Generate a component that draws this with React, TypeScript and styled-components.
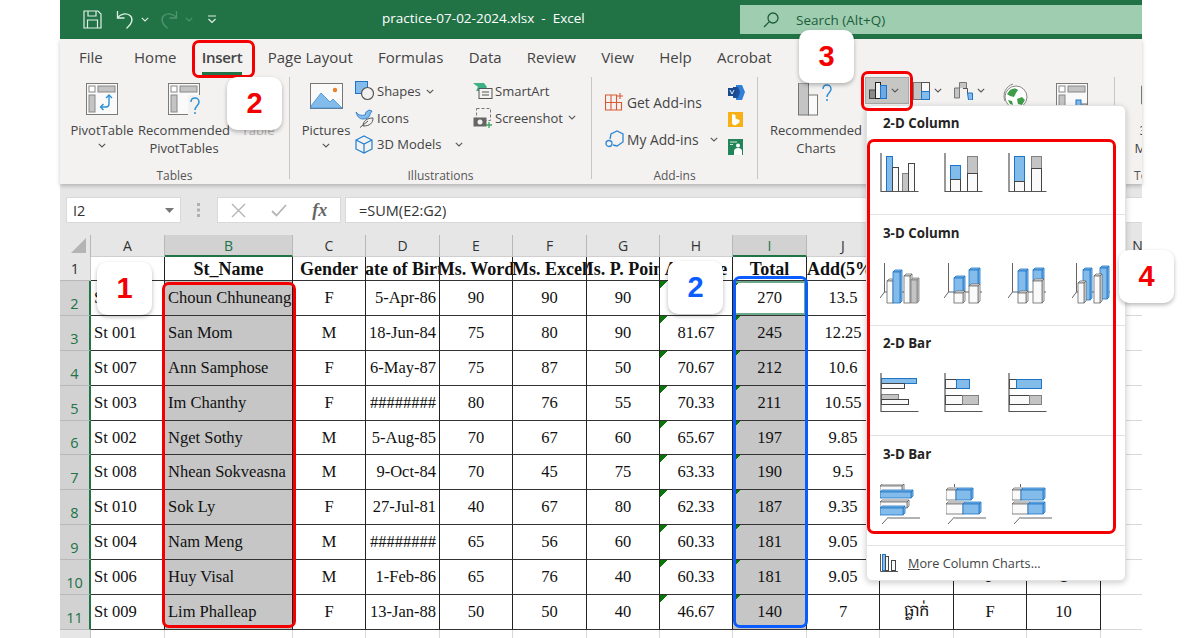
import styled, { createGlobalStyle } from 'styled-components';
import type { ReactNode } from 'react';

const GlobalStyle = createGlobalStyle`
  html, body {
    margin: 0;
    height: 638px;
    overflow: hidden;
    background: #fff;
    font-family: 'Open Sans', 'Liberation Sans', sans-serif;
  }
`;

const BLUE = '#83bbeb';
const BLUE_LINE = '#1f74c4';
const GREY = '#c4c4c4';
const GREY_LINE = '#808080';
const WHITE = '#fafafa';
const INK = '#444';

/* ---------- frame ---------- */

const Frame = styled.div`
  position: relative;
  width: 1082px;
  height: 638px;
  margin-left: 60px;
  background: #e6e6e6;
`;

/* ---------- title bar ---------- */

const TitleBar = styled.div`
  display: flex;
  height: 39px;
  background: #217346;
`;

const QuickAccess = styled.div`
  display: flex;
  align-items: center;
  width: 322px;
  padding-left: 23px;
  box-sizing: border-box;
`;

const QatItem = styled.span<{ $left?: number }>`
  display: inline-flex;
  margin-left: ${(p) => p.$left ?? 0}px;
`;

const FileTitle = styled.div`
  width: 358px;
  color: #fff;
  font-size: 13.5px;
  line-height: 37px;
  white-space: pre;
`;

const SearchBox = styled.div`
  display: flex;
  align-items: center;
  gap: 17px;
  flex: 1;
  height: 29px;
  margin-top: 5px;
  padding-left: 23px;
  background: #9fcdb0;
  color: #1d5c3a;
  font-size: 13.5px;
`;

/* ---------- ribbon ---------- */

const Ribbon = styled.div`
  height: 145px;
  background: #f3f2f1;
  box-shadow: 0 2px 4px rgba(0, 0, 0, 0.22);
  position: relative;
`;

const TabRow = styled.div`
  display: flex;
  gap: 25.3px;
  height: 38px;
  padding-left: 19px;
  color: #444;
  font-size: 15px;
  line-height: 36px;
`;

const Tab = styled.div<{ $active?: boolean; $wide?: boolean }>`
  height: 33px;
  margin-right: ${(p) => (p.$wide ? '6px' : '0')};
  color: #444;
  letter-spacing: ${(p) => (p.$active ? '-0.3px' : '0')};
  font-weight: ${(p) => (p.$active ? 600 : 400)};
  border-bottom: ${(p) => (p.$active ? '3px solid #217346' : '3px solid transparent')};
`;

const GroupRow = styled.div`
  display: flex;
  height: 107px;
  overflow: hidden;
`;

const Group = styled.div<{ $width: number; $last?: boolean }>`
  display: flex;
  flex-direction: column;
  flex: none;
  width: ${(p) => p.$width}px;
  box-sizing: border-box;
  margin-bottom: 5px;
  border-right: ${(p) => (p.$last ? 'none' : '1px solid #c8c6c4')};
`;

const GroupBody = styled.div<{ $pad?: number; $gap?: number }>`
  display: flex;
  flex: 1;
  gap: ${(p) => p.$gap ?? 0}px;
  padding-left: ${(p) => p.$pad ?? 0}px;
`;

const GroupLabel = styled.div`
  height: 17px;
  margin-bottom: -5px;
  color: #555;
  font-size: 12px;
  line-height: 17px;
  text-align: center;
`;

const BigButton = styled.div<{ $width: number; $faint?: boolean }>`
  display: flex;
  flex-direction: column;
  align-items: center;
  flex: none;
  width: ${(p) => p.$width}px;
  padding-top: 6px;
  color: ${(p) => (p.$faint ? '#b5b5b5' : '#444')};
  font-size: 13px;
  line-height: 18px;
  text-align: center;
  white-space: pre-line;
`;

const BigIcon = styled.div`
  display: flex;
  justify-content: center;
  height: 33px;
  margin-bottom: 5px;
`;

const DropCaret = styled.span`
  display: inline-flex;
  margin-top: 4px;
`;

const SmallList = styled.div<{ $left?: number; $width: number; $size?: number }>`
  display: flex;
  flex-direction: column;
  flex: none;
  width: ${(p) => p.$width}px;
  margin-left: ${(p) => p.$left ?? 0}px;
  padding-top: 1px;
  font-size: ${(p) => p.$size ?? 13}px;
`;

const SmallButton = styled.div<{ $height?: number }>`
  display: flex;
  align-items: center;
  height: ${(p) => p.$height ?? 26.5}px;
  color: #444;
  white-space: nowrap;
`;

const SmallIcon = styled.div`
  display: flex;
  align-items: center;
  width: 22px;
  flex: none;
`;

const Caret = styled.span<{ $gap?: number }>`
  display: inline-flex;
  margin-left: ${(p) => p.$gap ?? 5}px;
`;

const AppIcons = styled.div`
  display: flex;
  flex-direction: column;
  gap: 12px;
  flex: none;
  padding-top: 8px;
`;

const ChartButton = styled.div<{ $on?: boolean; $width: number; $left?: number }>`
  display: flex;
  align-items: center;
  gap: 4px;
  flex: none;
  width: ${(p) => p.$width}px;
  height: 27px;
  padding-left: 3px;
  margin-left: ${(p) => p.$left ?? 0}px;
  background: ${(p) => (p.$on ? '#c6c6c4' : 'transparent')};
  border: ${(p) => (p.$on ? '1px solid #a9a9a7' : '1px solid transparent')};
  box-sizing: border-box;
`;

const TopIcon = styled.div<{ $left: number }>`
  flex: none;
  margin-left: ${(p) => p.$left}px;
  padding-top: 6px;
`;

/* ---------- formula bar ---------- */

const FormulaRow = styled.div`
  display: flex;
  align-items: stretch;
  height: 26px;
  margin: 13px 0 12px 6px;
  color: #333;
  font-size: 14.5px;
`;

const NameBox = styled.div`
  display: flex;
  align-items: center;
  justify-content: space-between;
  width: 115px;
  padding: 0 6px;
  box-sizing: border-box;
  background: #fff;
  border: 1px solid #d9d9d9;
`;

const GripDots = styled.div`
  display: flex;
  align-items: center;
  justify-content: center;
  width: 36px;
`;

const FormulaButtons = styled.div`
  display: flex;
  align-items: center;
  justify-content: space-around;
  width: 124px;
  box-sizing: border-box;
  background: #fff;
  border: 1px solid #d9d9d9;
`;

const FxLabel = styled.span`
  color: #666;
  font-family: 'Liberation Serif', serif;
  font-size: 18px;
  font-style: italic;
  font-weight: 700;
`;

const FormulaInput = styled.div`
  display: flex;
  align-items: center;
  flex: 1;
  margin-left: 4px;
  padding-left: 13px;
  background: #fff;
  border: 1px solid #d9d9d9;
  border-right: none;
`;

/* ---------- sheet ---------- */

const SheetClip = styled.div`
  height: 403px;
  overflow: hidden;
`;

const Sheet = styled.div`
  display: grid;
  grid-template-columns: 31px 74px 128px 73px 74px 73px 74px 73px 73px 74px 73px 74px 73px 74px 74px;
  grid-template-rows: 22px 24px repeat(10, 34.9px) 20px;
  background: #fff;
`;

const Corner = styled.div`
  display: flex;
  align-items: flex-end;
  justify-content: flex-end;
  padding: 0 4px 4px 0;
  background: #e6e6e6;
  border-right: 1px solid #b8b8b8;
`;

const ColHead = styled.div<{ $sel?: boolean }>`
  display: flex;
  align-items: center;
  justify-content: center;
  box-sizing: border-box;
  background: ${(p) => (p.$sel ? '#d2d2d2' : '#e6e6e6')};
  border-right: 1px solid #b8b8b8;
  border-bottom: ${(p) => (p.$sel ? '2px solid #217346' : '1px solid #cfcfcf')};
  color: ${(p) => (p.$sel ? '#217346' : '#333')};
  font-size: 14px;
`;

const RowHead = styled.div<{ $sel?: boolean }>`
  display: flex;
  align-items: ${(p) => (p.$sel ? 'flex-end' : 'center')};
  justify-content: center;
  box-sizing: border-box;
  background: ${(p) => (p.$sel ? '#d2d2d2' : '#e6e6e6')};
  border-right: ${(p) => (p.$sel ? '2px solid #217346' : '1px solid #c4c4c4')};
  border-bottom: 1px solid #b8b8b8;
  color: ${(p) => (p.$sel ? '#217346' : '#333')};
  font-size: 14.5px;
  line-height: 22px;
`;

const Cell = styled.div<{
  $align?: 'left' | 'center' | 'right';
  $sel?: boolean;
  $active?: boolean;
  $head?: boolean;
  $flag?: boolean;
  $empty?: boolean;
}>`
  display: flex;
  align-items: center;
  justify-content: ${(p) =>
    p.$align === 'left' ? 'flex-start' : p.$align === 'right' ? 'flex-end' : 'center'};
  padding: ${(p) => (p.$head ? '1px' : '0')} ${(p) => (p.$align === 'right' ? '3px' : '0')} 0 ${(p) => (p.$align === 'left' ? '3px' : '0')};
  box-sizing: border-box;
  overflow: hidden;
  white-space: nowrap;
  color: #111;
  font-family: 'Liberation Serif', serif;
  font-size: ${(p) => (p.$head ? '18px' : '16.5px')};
  font-weight: ${(p) => (p.$head ? 700 : 400)};
  background-color: ${(p) => (p.$sel ? '#c6c6c6' : '#fff')};
  background-image: ${(p) =>
    p.$flag ? 'linear-gradient(135deg, #0a760a 5px, transparent 5px)' : 'none'};
  border-right: 1px solid ${(p) => (p.$empty ? '#d8d8d8' : '#222')};
  border-bottom: 1px solid ${(p) => (p.$empty ? '#d8d8d8' : '#333')};
  ${(p) => p.$active && 'box-shadow: inset 0 0 0 2px #6ea88a;'}
`;

/* ---------- call-outs that lie over the page ---------- */

const Badge = styled.div<{ $x: number; $y: number; $color: string }>`
  position: absolute;
  left: ${(p) => p.$x}px;
  top: ${(p) => p.$y}px;
  display: flex;
  align-items: center;
  justify-content: center;
  width: 55px;
  height: 53px;
  border-radius: 10px;
  background: #fff;
  box-shadow: 0 2px 4px rgba(0, 0, 0, 0.28);
  color: ${(p) => p.$color};
  font-family: 'Liberation Sans', Arial, sans-serif;
  font-size: 29px;
  font-weight: 700;
`;

const Outline = styled.div<{ $x: number; $y: number; $w: number; $h: number; $color?: string }>`
  position: absolute;
  left: ${(p) => p.$x}px;
  top: ${(p) => p.$y}px;
  width: ${(p) => p.$w}px;
  height: ${(p) => p.$h}px;
  box-sizing: border-box;
  border: 3px solid ${(p) => p.$color ?? '#f50000'};
  border-radius: 7px;
`;

/* ---------- chart menu ---------- */

const ChartMenu = styled.div`
  position: absolute;
  left: 806px;
  top: 105px;
  width: 260px;
  height: 476px;
  box-sizing: border-box;
  background: #fff;
  border: 1px solid #e2e2e2;
  border-radius: 6px;
  box-shadow: 0 2px 6px rgba(0, 0, 0, 0.2);
`;

const MenuSection = styled.div`
  height: 110px;
  box-sizing: border-box;
  padding: 8px 0 0 13px;
  border-bottom: 1px solid #e4e2e0;

  &:nth-child(1) {
    height: 109px;
  }
  &:nth-child(2) {
    height: 111px;
  }
  &:nth-child(even) {
    padding-top: 9px;
  }
`;

const MenuTitle = styled.div`
  height: 18px;
  padding-left: 3px;
  color: #252423;
  font-size: 13.3px;
  font-weight: 700;
  line-height: 18px;
`;

const IconRow = styled.div`
  display: flex;
  gap: 24px;
  margin-top: 20.5px;
`;

const MoreRow = styled.div`
  display: flex;
  align-items: center;
  gap: 10px;
  height: 34px;
  padding-left: 13px;
  color: #444;
  font-size: 12.7px;
`;

const Underlined = styled.span`
  text-decoration: underline;
`;

/* ---------- drawn icons ---------- */

const Chevron = ({ color = '#555' }: { color?: string }) => (
  <svg width="8" height="5" viewBox="0 0 8 5" fill="none">
    <path d="M0.8 0.8 4 4 7.2 0.8" stroke={color} strokeWidth="1.1" />
  </svg>
);

const SaveIcon = () => (
  <svg width="19" height="19" viewBox="0 0 19 19" fill="none" stroke="#dfeee5" strokeWidth="1.2">
    <path d="M1 1h14l3 3v14H1z" />
    <path d="M5 1v5h8V1M4.5 18v-8h10v8" />
  </svg>
);

const ArrowIcon = ({ color, flip }: { color: string; flip?: boolean }) => (
  <svg width="18" height="19" viewBox="0 0 18 19" fill="none" stroke={color} strokeWidth="1.3"
    transform={flip ? 'scale(-1 1)' : undefined}>
    <path d="M1.5 1v7h7" />
    <path d="M1.5 8C4 4 10 2.5 14 5.500 c3.500 3 2.500 8 -3.500 13" />
  </svg>
);

const CustomizeIcon = () => (
  <svg width="10" height="9" viewBox="0 0 10 9" fill="none" stroke="#dfeee5" strokeWidth="1.2">
    <path d="M1 1h8M1.500 4 5 7.500 8.500 4" />
  </svg>
);

const SearchIcon = () => (
  <svg width="16" height="16" viewBox="0 0 16 16" fill="none" stroke="#1d5c3a" strokeWidth="1.3">
    <circle cx="10" cy="6" r="5" />
    <path d="M6.400 9.600 1 15" />
  </svg>
);

const PivotPanels = () => (
  <g>
    <rect x="0.5" y="0.5" width="31" height="31" fill="#fafafa" stroke="#7a7a7a" />
    <rect x="3" y="3" width="6" height="6" fill="#fff" stroke="#888" />
    <rect x="12" y="3" width="17" height="6" fill={GREY} stroke="#888" />
    <rect x="3" y="12" width="6" height="17" fill={GREY} stroke="#888" />
  </g>
);

const PivotTableIcon = () => (
  <svg width="32" height="33" viewBox="0 0 32 33" fill="none">
    <PivotPanels />
    <path d="M23 12v9a3 3 0 0 1-3 3h-5" stroke="#2d8fd5" strokeWidth="1.4" />
    <path d="M20 15l3-3 3 3M17.500 21l-3 3 3 3" stroke="#2d8fd5" strokeWidth="1.4" />
  </svg>
);

const QuestionMark = ({ x, y }: { x: number; y: number }) => (
  <g transform={`translate(${x} ${y})`} fill="none" stroke="#2d8fd5" strokeWidth="1.5">
    <path d="M1 5C1 2 3 1 5 1s4 1.500 4 4c0 3.500-4 4-4 8" />
    <path d="M5 15v2" />
  </g>
);

const RecommendedPivotIcon = () => (
  <svg width="40" height="33" viewBox="-4 0 40 33" fill="none">
    <PivotPanels />
    <rect x="20" y="12" width="16" height="21" fill="#f3f2f1" />
    <QuestionMark x={22} y={14} />
  </svg>
);

const PicturesIcon = () => (
  <svg width="33" height="26" viewBox="0 0 33 26">
    <rect x="0.5" y="0.5" width="32" height="25" fill="#fafafa" stroke="#777" />
    <circle cx="25" cy="7" r="2.200" fill="#e8802c" />
    <path d="M1 23 11 10l9 9 3-3 9 9H1z" fill="#83bbeb" stroke="#3b8fd6" strokeWidth="0.8" />
  </svg>
);

const ShapesIcon = () => (
  <svg width="20" height="20" viewBox="0 0 20 20">
    <rect x="0.5" y="0.5" width="12" height="12" fill="#83bbeb" stroke="#1f74c4" />
    <circle cx="12.500" cy="12.500" r="6" fill="#f3f2f1" stroke="#555" strokeWidth="1.2" />
  </svg>
);

const IconsIcon = () => (
  <svg width="20" height="20" viewBox="0 0 20 20">
    <path d="M1 4c2 3 5 4 9 3l1-3 3-2 3 1-2 3c0 3-3 5-7 5-4 0-6-3-7-7z" fill="#83bbeb" stroke="#1f74c4" strokeWidth="0.8" />
    <path d="M8 18c0-5 4-8 10-8 0 5-3 8-10 8zM5 19.500 13 13" fill="#f3f2f1" stroke="#555" strokeWidth="1" />
  </svg>
);

const CubeIcon = () => (
  <svg width="18" height="19" viewBox="0 0 18 19" fill="none" stroke="#1f7fd0" strokeWidth="1.2">
    <path d="M9 1 17 5v9l-8 4-8-4V5z" />
    <path d="M1 5l8 4 8-4M9 9v9" />
  </svg>
);

const SmartArtIcon = () => (
  <svg width="20" height="18" viewBox="0 0 20 18">
    <path d="M0 1h11l3 4-3 4H3l2-4z" fill="#3fb083" />
    <rect x="6" y="6.500" width="13" height="10" fill="#f3f2f1" stroke="#555" />
    <path d="M9 10h7M9 13h7" stroke="#555" />
  </svg>
);

const ScreenshotIcon = () => (
  <svg width="20" height="20" viewBox="0 0 20 20" fill="none">
    <rect x="3.500" y="0.500" width="14" height="12" stroke="#777" strokeDasharray="3 2" />
    <rect x="0.500" y="9.500" width="13" height="9" fill="#666" />
    <circle cx="7" cy="14" r="2.500" fill="#f3f2f1" />
    <path d="M13 17h6M16 14v6" stroke="#3fa35f" strokeWidth="1.300" />
  </svg>
);

const GetAddinsIcon = () => (
  <svg width="19" height="18" viewBox="0 0 19 18" fill="none" stroke="#d9582f" strokeWidth="1.1">
    <path d="M0.500 2h11v15H0.500zM0.500 9.500h16V17h-5M6 2v15" />
    <path d="M15 0v6M12 3h6" />
  </svg>
);

const MyAddinsIcon = () => (
  <svg width="19" height="18" viewBox="0 0 19 18" fill="none" stroke="#2f86cf" strokeWidth="1.300">
    <path d="M5 9 6 4l6-3 6 3v8l-6 4-4-1" />
    <circle cx="4" cy="13.500" r="3" />
  </svg>
);

const VisioIcon = () => (
  <svg width="17" height="15" viewBox="0 0 17 15">
    <path d="M8 0h6l3 7-3 8H8z" fill="#2f7fd6" />
    <path d="M5 2h5l2 5-2 6H5z" fill="#1b4f9c" />
    <rect x="0" y="3" width="8" height="8" fill="#174a8f" />
    <path d="M2 5l2 4 2-4" stroke="#fff" fill="none" strokeWidth="0.900" />
  </svg>
);

const BingIcon = () => (
  <svg width="15" height="15" viewBox="0 0 15 15">
    <rect width="15" height="15" fill="#f7b016" />
    <path d="M4 2v10l3 1.500 4.500-3V8L7.500 6.500V3z" fill="#fff" />
  </svg>
);

const PeopleIcon = () => (
  <svg width="15" height="16" viewBox="0 0 15 16">
    <rect width="15" height="16" fill="#22855a" />
    <path d="M2 3h7M2 5.500h3" stroke="#cfe8da" strokeWidth="1" />
    <circle cx="10" cy="6.500" r="2" fill="#fff" />
    <path d="M6 16v-4c0-2 2-3 4-3s4 1 4 3v4z" fill="#fff" />
  </svg>
);

const RecommendedChartsIcon = () => (
  <svg width="36" height="33" viewBox="0 0 36 33">
    <rect x="0.500" y="0" width="10" height="32" fill={GREY} stroke="#777" />
    <rect x="10.500" y="12" width="9" height="20" fill="#fafafa" stroke="#777" />
    <QuestionMark x={24} y={1} />
  </svg>
);

const ColumnChartGlyph = () => (
  <svg width="18" height="17" viewBox="0 0 18 17">
    <rect x="0.500" y="8" width="6" height="8.500" fill="#8a8a8a" stroke="#444" />
    <rect x="6.500" y="0.500" width="5" height="16" fill="#f4f4f4" stroke="#222" />
    <rect x="11.500" y="3.500" width="6" height="13" fill="#6aa8e6" stroke="#1f74c4" />
  </svg>
);

const HierarchyGlyph = () => (
  <svg width="17" height="18" viewBox="0 0 17 18">
    <rect x="0.500" y="0.500" width="8" height="17" fill={GREY} stroke="#777" />
    <rect x="8.500" y="0.500" width="8" height="9" fill="#fafafa" stroke="#555" />
    <rect x="8.500" y="9.500" width="8" height="8" fill={BLUE} stroke={BLUE_LINE} />
  </svg>
);

const WaterfallGlyph = () => (
  <svg width="19" height="18" viewBox="0 0 19 18" fill="none">
    <path d="M0.500 16V6h5v10zM5.500 6V0.500h7v6" fill={GREY} stroke="#777" />
    <path d="M9 6.500h4.500V11" stroke="#555" />
    <path d="M13.500 11h5v7h-4z" fill={BLUE} stroke={BLUE_LINE} />
  </svg>
);

const GlobeGlyph = () => (
  <svg width="26" height="27" viewBox="0 0 26 27" fill="none">
    <circle cx="14" cy="14" r="11" fill="#fff" stroke="#888" />
    <path d="M8 7c3-2 6-2 8 0l-2 3-2 4-4-1-3-2zM15 16l5-2 3 3-3 5-4-1zM6 17l4 1 1 4-3-1z" fill="#3f9d4a" />
    <path d="M3 18C0 11 4 3 11 1" stroke="#888" />
  </svg>
);

const PivotChartGlyph = () => (
  <svg width="34" height="33" viewBox="0 0 34 33" fill="none">
    <PivotPanels />
    <rect x="20" y="17" width="5" height="14" fill={BLUE} stroke={BLUE_LINE} />
    <rect x="26" y="21" width="5" height="10" fill={GREY} stroke="#777" />
  </svg>
);

const MapsGlyph = () => (
  <svg width="14" height="22" viewBox="0 0 14 22" fill="none" stroke="#777">
    <path d="M0.500 3 5 0.500V18L0.500 21zM5 0.500h8.500V18H5" fill="#fafafa" />
  </svg>
);

const ArrowDown = () => (
  <svg width="9" height="5" viewBox="0 0 9 5">
    <path d="M0 0h9L4.500 5z" fill="#777" />
  </svg>
);

const Grip = () => (
  <svg width="4" height="14" viewBox="0 0 4 14" fill="#b0b0b0">
    <rect width="3" height="3" />
    <rect y="5.500" width="3" height="3" />
    <rect y="11" width="3" height="3" />
  </svg>
);

const CrossIcon = () => (
  <svg width="15" height="15" viewBox="0 0 15 15" fill="none" stroke="#b5b5b5" strokeWidth="1.400">
    <path d="M1 1l13 13M14 1 1 14" />
  </svg>
);

const CheckIcon = () => (
  <svg width="16" height="13" viewBox="0 0 16 13" fill="none" stroke="#b5b5b5" strokeWidth="1.800">
    <path d="M1 7l4.500 4.500L15 1" />
  </svg>
);

const CornerMark = () => (
  <svg width="15" height="15" viewBox="0 0 15 15">
    <path d="M15 0v15H0z" fill="#b4b4b4" />
  </svg>
);

/* Chart gallery: one 40 × 40 drawing per chart type */

const Rect = ({ x, y, w, h, tone }: { x: number; y: number; w: number; h: number; tone: 'b' | 'g' | 'w' }) => (
  <rect
    x={x + 0.5}
    y={y + 0.5}
    width={w}
    height={h}
    fill={tone === 'b' ? BLUE : tone === 'g' ? GREY : WHITE}
    stroke={tone === 'b' ? BLUE_LINE : tone === 'g' ? GREY_LINE : INK}
  />
);

const Frame2D = ({ children }: { children: ReactNode }) => (
  <svg width="40" height="40" viewBox="0 0 40 40" fill="none">
    {children}
    <path d="M1 0v38.500h37.500" stroke="#555" strokeWidth="1.200" />
  </svg>
);

const Box3D = ({ x, y, w, h, tone }: { x: number; y: number; w: number; h: number; tone: 'b' | 'g' | 'w' }) => {
  const fill = tone === 'b' ? BLUE : tone === 'g' ? GREY : WHITE;
  const line = tone === 'b' ? BLUE_LINE : tone === 'g' ? GREY_LINE : '#666';
  return (
    <g stroke={line} strokeWidth="0.800" fill={fill}>
      <path d={`M${x} ${y}l2 -2h${w}l-2 2zM${x + w} ${y}l2 -2v${h}l-2 2z`} />
      <rect x={x} y={y} width={w} height={h} />
    </g>
  );
};

const Frame3D = ({ children }: { children: ReactNode }) => (
  <svg width="40" height="42" viewBox="0 0 40 42" fill="none">
    <path d="M4.500 0v29M0 35l4.500-6H38" stroke="#666" />
    {children}
  </svg>
);

const FrameBar3D = ({ children }: { children: ReactNode }) => (
  <svg width="42" height="41" viewBox="0 0 42 41" fill="none">
    <path d="M8.500 33 2 40M8.500 34H40" stroke="#666" />
    {children}
  </svg>
);

const columnCharts = [
  <Frame2D key="a">
    <Rect x={6} y={3} w={6} h={35} tone="b" />
    <Rect x={12} y={14} w={6} h={24} tone="w" />
    <Rect x={22} y={20} w={6} h={18} tone="g" />
    <Rect x={28} y={10} w={6} h={28} tone="w" />
  </Frame2D>,
  <Frame2D key="b">
    <Rect x={6} y={12} w={10} h={14} tone="b" />
    <Rect x={6} y={26} w={10} h={12} tone="w" />
    <Rect x={23} y={3} w={10} h={17} tone="g" />
    <Rect x={23} y={20} w={10} h={18} tone="w" />
  </Frame2D>,
  <Frame2D key="c">
    <Rect x={6} y={3} w={10} h={25} tone="b" />
    <Rect x={6} y={28} w={10} h={10} tone="w" />
    <Rect x={23} y={3} w={10} h={12} tone="g" />
    <Rect x={23} y={15} w={10} h={23} tone="w" />
  </Frame2D>,
];

const column3D = [
  <Frame3D key="a">
    <Box3D x={7} y={18} w={6} h={22} tone="w" />
    <Box3D x={13} y={9} w={7} h={31} tone="b" />
    <Box3D x={24} y={13} w={6} h={27} tone="w" />
    <Box3D x={31} y={17} w={6} h={23} tone="g" />
  </Frame3D>,
  <Frame3D key="b">
    <Box3D x={10} y={15} w={9} h={15} tone="b" />
    <Box3D x={10} y={30} w={9} h={10} tone="w" />
    <Box3D x={25} y={7} w={9} h={16} tone="b" />
    <Box3D x={25} y={23} w={9} h={17} tone="w" />
  </Frame3D>,
  <Frame3D key="c">
    <Box3D x={10} y={8} w={8} h={22} tone="b" />
    <Box3D x={10} y={30} w={8} h={10} tone="w" />
    <Box3D x={25} y={7} w={9} h={11} tone="b" />
    <Box3D x={25} y={18} w={9} h={22} tone="w" />
  </Frame3D>,
  <Frame3D key="d">
    <Box3D x={11} y={7} w={7} h={30} tone="b" />
    <Box3D x={28} y={5} w={7} h={31} tone="b" />
    <Box3D x={6} y={20} w={6} h={20} tone="w" />
    <Box3D x={22} y={13} w={6} h={27} tone="w" />
  </Frame3D>,
];

const bar2D = [
  <Frame2D key="a">
    <Rect x={1} y={5} w={35} h={5} tone="b" />
    <Rect x={1} y={10} w={23} h={5} tone="w" />
    <Rect x={1} y={21} w={17} h={5} tone="g" />
    <Rect x={1} y={26} w={27} h={5} tone="w" />
  </Frame2D>,
  <Frame2D key="b">
    <Rect x={1} y={6} w={11} h={9} tone="w" />
    <Rect x={12} y={6} w={13} h={9} tone="b" />
    <Rect x={1} y={22} w={17} h={9} tone="w" />
    <Rect x={18} y={22} w={16} h={9} tone="g" />
  </Frame2D>,
  <Frame2D key="c">
    <Rect x={1} y={6} w={7} h={9} tone="w" />
    <Rect x={8} y={6} w={25} h={9} tone="b" />
    <Rect x={1} y={22} w={20} h={9} tone="w" />
    <Rect x={21} y={22} w={12} h={9} tone="g" />
  </Frame2D>,
];

const bar3D = [
  <FrameBar3D key="a">
    <Box3D x={0} y={2} w={22} h={6} tone="w" />
    <Box3D x={0} y={8} w={31} h={6} tone="b" />
    <Box3D x={0} y={18} w={27} h={6} tone="w" />
    <Box3D x={0} y={24} w={23} h={7} tone="b" />
  </FrameBar3D>,
  <FrameBar3D key="b">
    <path d="M8.500 0v3" stroke="#666" />
    <Box3D x={0} y={6} w={10} h={10} tone="w" />
    <Box3D x={10} y={6} w={15} h={10} tone="b" />
    <Box3D x={0} y={20} w={17} h={10} tone="w" />
    <Box3D x={17} y={20} w={16} h={10} tone="b" />
  </FrameBar3D>,
  <FrameBar3D key="c">
    <path d="M8.500 0v3" stroke="#666" />
    <Box3D x={0} y={6} w={9} h={10} tone="w" />
    <Box3D x={9} y={6} w={22} h={10} tone="b" />
    <Box3D x={0} y={20} w={16} h={10} tone="w" />
    <Box3D x={16} y={20} w={15} h={10} tone="b" />
  </FrameBar3D>,
];

const MoreChartsIcon = () => (
  <svg width="18" height="18" viewBox="0 0 18 18" fill="none">
    <rect x="2.500" y="0.500" width="3" height="16" fill={BLUE} stroke={BLUE_LINE} />
    <rect x="5.500" y="2.500" width="3" height="14" fill={WHITE} stroke={INK} />
    <rect x="11.500" y="6.500" width="4" height="10" fill={WHITE} stroke={INK} />
    <path d="M0.500 0v17.500H18" stroke="#555" />
  </svg>
);

/* ---------- data ---------- */

const tabs = ['Page Layout', 'Formulas', 'Data', 'Review', 'View', 'Help', 'Acrobat'];
const columns = ['A', 'B', 'C', 'D', 'E', 'F', 'G', 'H', 'I', 'J', 'K', 'L', 'M', 'N'];
const titles = ['', 'St_Name', 'Gender', 'Date of Birth', 'Ms. Word', 'Ms. Excel', 'Ms. P. Point', 'Average', 'Total', 'Add(5%)', '', '', ''];

const students = [
  ['St 005', 'Choun Chhuneang', 'F', '5-Apr-86', '90', '90', '90', '90', '270', '13.5', '', '', ''],
  ['St 001', 'San Mom', 'M', '18-Jun-84', '75', '80', '90', '81.67', '245', '12.25', '', '', ''],
  ['St 007', 'Ann Samphose', 'F', '6-May-87', '75', '87', '50', '70.67', '212', '10.6', '', '', ''],
  ['St 003', 'Im Chanthy', 'F', '########', '80', '76', '55', '70.33', '211', '10.55', '', '', ''],
  ['St 002', 'Nget Sothy', 'M', '5-Aug-85', '70', '67', '60', '65.67', '197', '9.85', '', '', ''],
  ['St 008', 'Nhean Sokveasna', 'M', '9-Oct-84', '70', '45', '75', '63.33', '190', '9.5', '', '', ''],
  ['St 010', 'Sok Ly', 'F', '27-Jul-81', '40', '67', '80', '62.33', '187', '9.35', '', '', ''],
  ['St 004', 'Nam Meng', 'M', '########', '65', '56', '60', '60.33', '181', '9.05', '', '', ''],
  ['St 006', 'Huy Visal', 'M', '1-Feb-86', '65', '76', '40', '60.33', '181', '9.05', '', 'F', '1'],
  ['St 009', 'Lim Phalleap', 'F', '13-Jan-88', '50', '50', '40', '46.67', '140', '7', 'ធ្លាក់', 'F', '10'],
];

const alignFor = (col: number): 'left' | 'center' | 'right' =>
  col <= 1 ? 'left' : col === 3 ? 'right' : 'center';

function App() {
  return (
    <>
      <GlobalStyle />
      <Frame>
        <TitleBar>
          <QuickAccess>
            <SaveIcon />
            <QatItem $left={14}><ArrowIcon color="#dfeee5" /></QatItem>
            <QatItem $left={7}><Chevron color="#dfeee5" /></QatItem>
            <QatItem $left={11}><ArrowIcon color="#4f9570" flip /></QatItem>
            <QatItem $left={7}><Chevron color="#4f9570" /></QatItem>
            <QatItem $left={14}><CustomizeIcon /></QatItem>
          </QuickAccess>
          <FileTitle>practice-07-02-2024.xlsx  -  Excel</FileTitle>
          <SearchBox>
            <SearchIcon />
            Search (Alt+Q)
          </SearchBox>
        </TitleBar>

        <Ribbon>
          <TabRow>
            <Tab $wide>File</Tab>
            <Tab>Home</Tab>
            <Tab $active>Insert</Tab>
            {tabs.map((tab) => (
              <Tab key={tab}>{tab}</Tab>
            ))}
          </TabRow>
          <GroupRow>
            <Group $width={230}>
              <GroupBody $pad={11} $gap={5}>
                <BigButton $width={62}>
                  <BigIcon><PivotTableIcon /></BigIcon>
                  PivotTable
                  <DropCaret><Chevron /></DropCaret>
                </BigButton>
                <BigButton $width={92}>
                  <BigIcon><RecommendedPivotIcon /></BigIcon>
                  {'Recommended\nPivotTables'}
                </BigButton>
                <BigButton $width={46} $faint>
                  <BigIcon />
                  Table
                </BigButton>
              </GroupBody>
              <GroupLabel>Tables</GroupLabel>
            </Group>

            <Group $width={302}>
              <GroupBody $pad={11}>
                <BigButton $width={50}>
                  <BigIcon><PicturesIcon /></BigIcon>
                  Pictures
                  <DropCaret><Chevron /></DropCaret>
                </BigButton>
                <SmallList $left={4} $width={118}>
                  <SmallButton><SmallIcon><ShapesIcon /></SmallIcon>Shapes<Caret><Chevron /></Caret></SmallButton>
                  <SmallButton><SmallIcon><IconsIcon /></SmallIcon>Icons</SmallButton>
                  <SmallButton><SmallIcon><CubeIcon /></SmallIcon>3D Models<Caret $gap={13}><Chevron /></Caret></SmallButton>
                </SmallList>
                <SmallList $width={110}>
                  <SmallButton><SmallIcon><SmartArtIcon /></SmallIcon>SmartArt</SmallButton>
                  <SmallButton><SmallIcon><ScreenshotIcon /></SmallIcon>Screenshot<Caret><Chevron /></Caret></SmallButton>
                </SmallList>
              </GroupBody>
              <GroupLabel>Illustrations</GroupLabel>
            </Group>

            <Group $width={166}>
              <GroupBody $pad={13}>
                <SmallList $width={123} $size={13.8}>
                  <SmallButton $height={48}><SmallIcon><GetAddinsIcon /></SmallIcon>Get Add-ins</SmallButton>
                  <SmallButton $height={26}><SmallIcon><MyAddinsIcon /></SmallIcon>My Add-ins<Caret $gap={12}><Chevron /></Caret></SmallButton>
                </SmallList>
                <AppIcons>
                  <VisioIcon />
                  <BingIcon />
                  <PeopleIcon />
                </AppIcons>
              </GroupBody>
              <GroupLabel>Add-ins</GroupLabel>
            </Group>

            <Group $width={357}>
              <GroupBody $pad={12}>
                <BigButton $width={92}>
                  <BigIcon><RecommendedChartsIcon /></BigIcon>
                  {'Recommended\nCharts'}
                </BigButton>
                <ChartButton $on $width={44} $left={3}><ColumnChartGlyph /><Chevron /></ChartButton>
                <ChartButton $width={41}><HierarchyGlyph /><Chevron /></ChartButton>
                <ChartButton $width={40}><WaterfallGlyph /><Chevron /></ChartButton>
                <TopIcon $left={12}><GlobeGlyph /></TopIcon>
                <TopIcon $left={28}><PivotChartGlyph /></TopIcon>
              </GroupBody>
              <GroupLabel>Charts</GroupLabel>
            </Group>

            <Group $width={70} $last>
              <GroupBody>
                <BigButton $width={66}>
                  <BigIcon><MapsGlyph /></BigIcon>
                  {'3D\nMap'}
                </BigButton>
              </GroupBody>
              <GroupLabel>Tours</GroupLabel>
            </Group>
          </GroupRow>
        </Ribbon>

        <FormulaRow>
          <NameBox>I2<ArrowDown /></NameBox>
          <GripDots><Grip /></GripDots>
          <FormulaButtons>
            <CrossIcon />
            <CheckIcon />
            <FxLabel>fx</FxLabel>
          </FormulaButtons>
          <FormulaInput>=SUM(E2:G2)</FormulaInput>
        </FormulaRow>

        <SheetClip>
          <Sheet>
            <Corner><CornerMark /></Corner>
            {columns.map((col) => (
              <ColHead key={col} $sel={col === 'B' || col === 'I'}>{col}</ColHead>
            ))}

            <RowHead>1</RowHead>
            {titles.map((title, col) => (
              <Cell key={col} $head>{title}</Cell>
            ))}
            <Cell $empty />

            {students.flatMap((row, r) => [
              <RowHead key={`h${r}`} $sel>{r + 2}</RowHead>,
              ...row.map((value, col) => (
                <Cell
                  key={`${r}-${col}`}
                  $align={alignFor(col)}
                  $sel={col === 1 || (col === 8 && r > 0)}
                  $active={col === 8 && r === 0}
                  $flag={col === 7 || col === 8}
                >
                  {value}
                </Cell>
              )),
              <Cell key={`n${r}`} $empty />,
            ])}

            <RowHead />
            {columns.map((col) => (
              <Cell key={col} $empty />
            ))}
          </Sheet>
        </SheetClip>

        <ChartMenu>
          <MenuSection>
            <MenuTitle>2-D Column</MenuTitle>
            <IconRow>{columnCharts}</IconRow>
          </MenuSection>
          <MenuSection>
            <MenuTitle>3-D Column</MenuTitle>
            <IconRow>{column3D}</IconRow>
          </MenuSection>
          <MenuSection>
            <MenuTitle>2-D Bar</MenuTitle>
            <IconRow>{bar2D}</IconRow>
          </MenuSection>
          <MenuSection>
            <MenuTitle>3-D Bar</MenuTitle>
            <IconRow>{bar3D}</IconRow>
          </MenuSection>
          <MoreRow>
            <MoreChartsIcon />
            <span><Underlined>M</Underlined>ore Column Charts...</span>
          </MoreRow>
        </ChartMenu>

        <Outline $x={132} $y={40} $w={63} $h={38} />
        <Outline $x={801} $y={71} $w={52} $h={40} />
        <Outline $x={807} $y={139} $w={249} $h={395} />
        <Outline $x={102} $y={282} $w={134} $h={346} />
        <Outline $x={673} $y={276} $w={75} $h={352} $color="#0b5cff" />

        <Badge $x={167} $y={77} $color="#f50000">2</Badge>
        <Badge $x={739} $y={30} $color="#f50000">3</Badge>
        <Badge $x={37} $y={262} $color="#f50000">1</Badge>
        <Badge $x={608} $y={261} $color="#0b5cff">2</Badge>
        <Badge $x={1059} $y={250} $color="#f50000">4</Badge>
      </Frame>
    </>
  );
}

export default App;
